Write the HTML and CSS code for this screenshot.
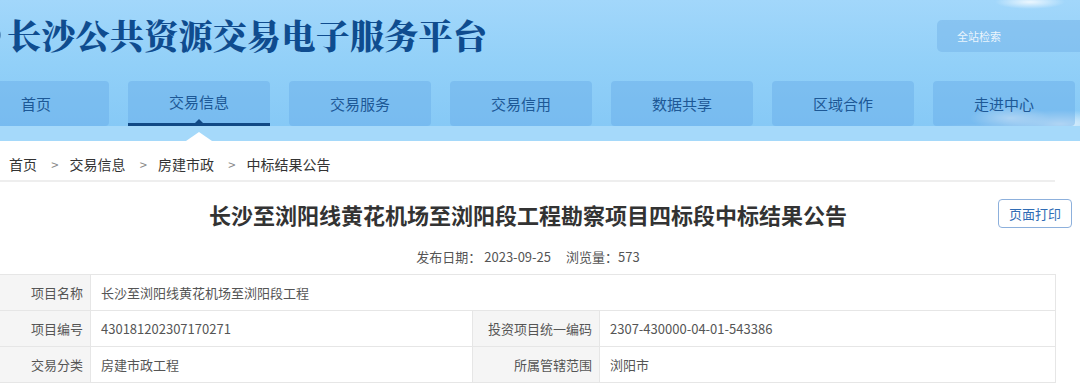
FILE: index.html
```html
<!DOCTYPE html>
<html lang="zh-CN">
<head>
    <meta charset="UTF-8">
    <title>长沙至浏阳线黄花机场至浏阳段工程勘察项目四标段中标结果公告</title>
    <link rel="stylesheet" href="styles.css">
</head>
<body>
    <header>
        <div class="top">
            <div class="logo">
                <svg class="emblem" width="30" height="30" viewBox="0 0 30 30">
                    <circle cx="15" cy="15" r="12" fill="none" stroke="#1b4f8c" stroke-width="3"/>
                    <circle cx="15" cy="15" r="6" fill="#1b4f8c"/>
                </svg>
                <span class="site-name">长沙公共资源交易电子服务平台</span>
            </div>
            <div class="search">全站检索</div>
        </div>
        <nav>
            <a href="#">首页</a>
            <a href="#" class="active">交易信息</a>
            <a href="#">交易服务</a>
            <a href="#">交易信用</a>
            <a href="#">数据共享</a>
            <a href="#">区域合作</a>
            <a href="#">走进中心</a>
        </nav>
    </header>

    <div class="crumbs">
        <a href="#">首页</a>
        <span class="sep">&gt;</span>
        <a href="#">交易信息</a>
        <span class="sep">&gt;</span>
        <a href="#">房建市政</a>
        <span class="sep">&gt;</span>
        <a href="#">中标结果公告</a>
    </div>

    <div class="article">
        <div class="title-row">
            <h1>长沙至浏阳线黄花机场至浏阳段工程勘察项目四标段中标结果公告</h1>
            <button class="print">页面打印</button>
        </div>
        <p class="meta">发布日期： 2023-09-25<span class="views">浏览量：573</span></p>

        <table class="info">
            <colgroup>
                <col class="c1">
                <col class="c2">
                <col class="c3">
                <col>
            </colgroup>
            <tr>
                <th>项目名称</th>
                <td colspan="3">长沙至浏阳线黄花机场至浏阳段工程</td>
            </tr>
            <tr>
                <th>项目编号</th>
                <td>430181202307170271</td>
                <th>投资项目统一编码</th>
                <td>2307-430000-04-01-543386</td>
            </tr>
            <tr>
                <th>交易分类</th>
                <td>房建市政工程</td>
                <th>所属管辖范围</th>
                <td>浏阳市</td>
            </tr>
        </table>
    </div>
</body>
</html>
```

FILE: styles.css
```css
* {
    margin: 0;
    padding: 0;
    box-sizing: border-box;
}

body {
    background: #fff;
    color: #333;
    font-family: "Microsoft YaHei", "Noto Sans CJK SC", sans-serif;
    width: 1080px;
    overflow: hidden;
}

a {
    color: inherit;
    text-decoration: none;
}

header {
    height: 141px;
    background:
        radial-gradient(ellipse 40px 12px at 1010px 118px, rgba(255,255,255,0.75), rgba(255,255,255,0) 100%),
        radial-gradient(ellipse 60px 14px at 1060px 124px, rgba(255,255,255,0.8), rgba(255,255,255,0) 100%),
        radial-gradient(ellipse 90px 10px at 980px 134px, rgba(255,255,255,0.7), rgba(255,255,255,0) 100%),
        radial-gradient(ellipse 35px 7px at 1030px 2px, rgba(255,255,255,0.8), rgba(255,255,255,0) 100%),
        linear-gradient(180deg, #a2d7fb 0%, #92d0f8 50%, #86c9f6 100%);
    border-bottom: 15px solid #a5d9fa;
    position: relative;
}

.top {
    height: 70px;
    display: flex;
    align-items: center;
    justify-content: space-between;
}

.logo {
    display: flex;
    align-items: center;
}

.emblem {
    margin-left: -28px;
    margin-right: 5px;
}

.site-name {
    font-family: "Noto Serif CJK SC", "Noto Sans CJK SC", serif;
    font-weight: 900;
    font-size: 34px;
    line-height: 40px;
    color: #0f4c8f;
    letter-spacing: 0.3px;
}

.search {
    width: 170px;
    height: 32px;
    margin-right: -27px;
    margin-top: 2px;
    border-radius: 5px;
    background: rgba(110, 175, 230, 0.45);
    color: rgba(255, 255, 255, 0.85);
    font-size: 11px;
    line-height: 32px;
    padding-left: 20px;
}

nav {
    margin-top: 11px;
    margin-left: -33px;
    display: grid;
    grid-template-columns: repeat(7, 142px);
    gap: 19px;
}

nav a {
    height: 45px;
    line-height: 45px;
    text-align: center;
    font-size: 15px;
    color: #1d5896;
    background: rgba(100, 170, 230, 0.42);
    border-radius: 4px;
    position: relative;
}

nav a:first-child {
    text-align: right;
    padding-right: 58px;
}

nav a.active {
    border-bottom: 3px solid #114985;
    border-radius: 4px 4px 0 0;
    line-height: 42px;
}

nav a.active::before {
    content: "";
    position: absolute;
    left: 50%;
    bottom: 0;
    margin-left: -4px;
    border: 4px solid transparent;
    border-bottom-color: #114985;
    border-top: 0;
}

nav a.active::after {
    content: "";
    position: absolute;
    left: 50%;
    bottom: -18px;
    margin-left: -13px;
    border-left: 13px solid transparent;
    border-right: 13px solid transparent;
    border-bottom: 9px solid #fff;
}

.crumbs {
    height: 41px;
    padding: 13px 0 0 9px;
    border-bottom: 2px solid #eeeeee;
    width: 1055px;
    font-size: 14px;
    color: #333;
}

.crumbs .sep {
    color: #888;
    font-size: 13px;
    margin: 0 8px 0 11px;
}

.article {
    width: 1056px;
}

.title-row {
    position: relative;
    height: 65px;
    padding-top: 16px;
}

.title-row h1 {
    text-align: center;
    font-size: 22px;
    font-weight: bold;
    line-height: 32px;
    color: #333;
}

.print {
    position: absolute;
    right: -16px;
    top: 17px;
    width: 74px;
    height: 29px;
    border: 1px solid #8db0dc;
    border-radius: 4px;
    background: #fff;
    color: #2f6cb5;
    font-family: inherit;
    font-size: 13px;
}

.meta {
    text-align: center;
    font-size: 13px;
    color: #555;
    line-height: 20px;
}

.meta .views {
    margin-left: 15px;
}

.info {
    margin-top: 7px;
    margin-left: -1px;
    width: 1057px;
    border-collapse: collapse;
    table-layout: fixed;
    font-size: 13px;
    color: #555;
}

.info .c1 {
    width: 91px;
}

.info .c2 {
    width: 382px;
}

.info .c3 {
    width: 127px;
}

.info th,
.info td {
    height: 36px;
    border: 1px solid #e6e6e6;
    font-weight: normal;
}

.info th {
    background: #f5f5f5;
    text-align: right;
    padding-right: 7px;
}

.info td {
    text-align: left;
    padding-left: 10px;
}
```
